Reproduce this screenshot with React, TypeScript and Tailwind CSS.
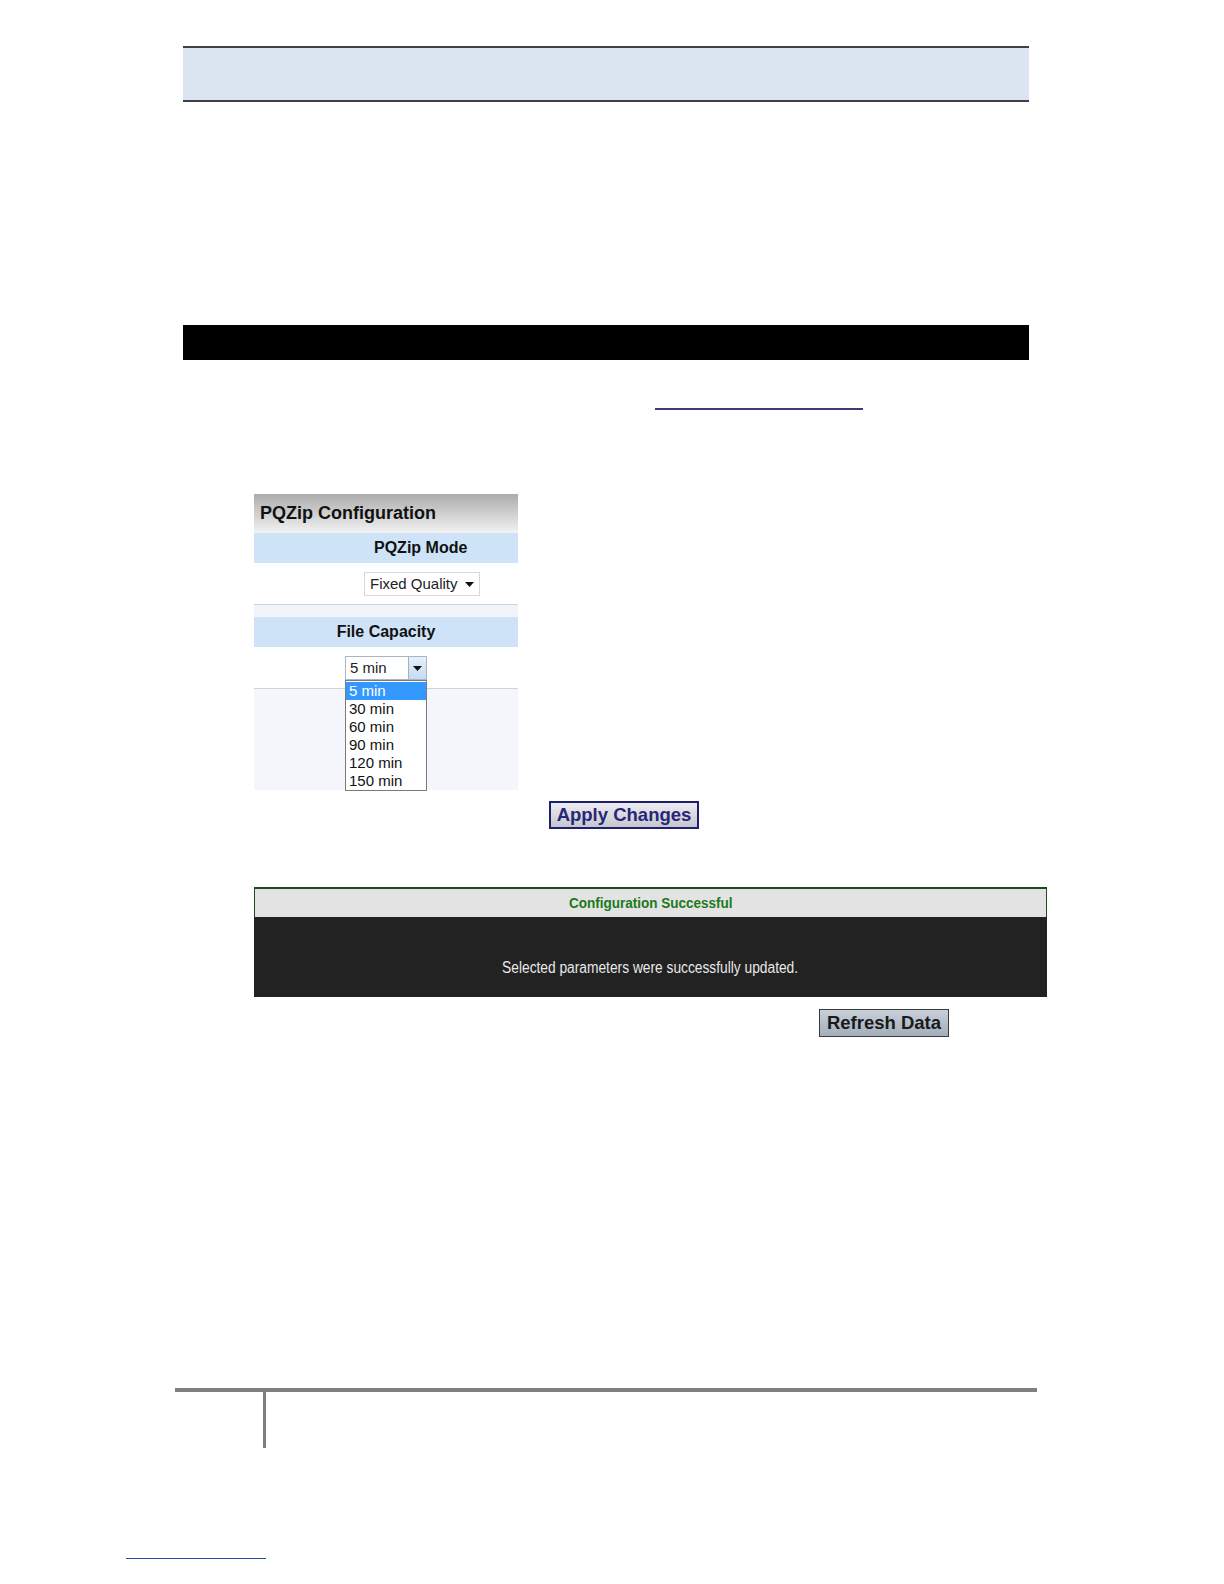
import React from "react";

const Caret = () => (
  <svg width="9" height="5" viewBox="0 0 9 5" aria-hidden="true">
    <path d="M0 0h9L4.5 5z" fill="#111" />
  </svg>
);

const minutes = ["5 min", "30 min", "60 min", "90 min", "120 min", "150 min"];

export default function App() {
  return (
    <div className="relative h-[1584px] w-[1224px] overflow-hidden bg-white font-['Liberation_Sans',Arial,sans-serif]">
      <div className="pt-[46px]">
        {/* page header band */}
        <div className="ml-[183px] h-[56px] w-[846px] border-y-2 border-[#404040] bg-[#dbe5f1]" />
      </div>

      {/* section bar */}
      <div className="ml-[183px] mt-[223px] h-[35px] w-[846px] bg-black" />

      {/* link */}
      <div className="ml-[655px] mt-[48px] h-[2px] w-[208px] bg-[#3f3a78]" />

      {/* PQZip configuration panel */}
      <div className="relative ml-[254px] mt-[84px] w-[264px]">
        <div className="flex h-[39px] items-center bg-gradient-to-b from-[#acacac] to-[#f3f3f3] pl-[6px] text-[18px] font-bold text-[#111]">
          PQZip Configuration
        </div>
        <div className="flex h-[30px] items-center bg-[#cfe3f8] pl-[120px] text-[16px] font-bold text-[#111]">
          PQZip Mode
        </div>
        <div className="h-[41px] bg-white pt-[9px]">
          <div className="ml-[110px] flex h-[24px] w-[116px] items-center justify-between border border-[#d8d8d8] bg-white pl-[5px] pr-[5px] text-[15px] text-[#222]">
            <span>Fixed Quality</span>
            <Caret />
          </div>
        </div>
        <div className="h-[13px] border-t border-[#c9d5e6] bg-[#f3f4fa]" />
        <div className="flex h-[30px] items-center justify-center bg-[#cfe3f8] text-[16px] font-bold text-[#111]">
          File Capacity
        </div>
        <div className="h-[41px] bg-white pt-[9px]">
          <div className="ml-[91px] flex h-[24px] w-[82px] items-stretch border border-[#a9b6c6] bg-white text-[15px] text-[#222]">
            <span className="flex flex-1 items-center pl-[4px]">5 min</span>
            <span className="flex w-[18px] items-center justify-center border-l border-[#9fb3c8] bg-gradient-to-b from-[#e6f0fa] to-[#c4dcf2]">
              <Caret />
            </span>
          </div>
        </div>
        <div className="h-[102px] border-t border-[#c9d5e6] bg-[#f5f5fc]" />

        {/* open dropdown list */}
        <div className="absolute left-[91px] top-[186px] w-[82px] border border-[#7a7a7a] bg-white pt-px text-[15px] leading-[18px] text-[#111]">
          {minutes.map((m, i) => (
            <div
              key={m}
              className={i === 0 ? "bg-[#3399ff] pl-[3px] text-white" : "pl-[3px]"}
            >
              {m}
            </div>
          ))}
        </div>
      </div>

      {/* apply button */}
      <div className="ml-[549px] mt-[11px] flex h-[28px] w-[150px] items-center justify-center border-2 border-[#1f1f6e] bg-gradient-to-b from-[#ececf0] to-[#c6c6ce] text-[18.5px] font-bold text-[#26267a]">
        Apply Changes
      </div>

      {/* status panel */}
      <div className="ml-[254px] mt-[58px] w-[793px]">
        <div className="flex h-[30px] items-center justify-center border-x border-t-2 border-[#1e4a1e] bg-[#e3e3e3] text-[15px] font-bold text-[#1b7a1b]">
          <span className="inline-block scale-x-[0.9]">Configuration Successful</span>
        </div>
        <div className="flex h-[80px] justify-center bg-[#222222] pt-[39px] text-[16px] text-[#e8e8e8]">
          <span className="inline-block scale-x-[0.86]">Selected parameters were successfully updated.</span>
        </div>
      </div>

      {/* refresh button */}
      <div className="ml-[819px] mt-[12px] flex h-[28px] w-[130px] items-center justify-center border border-[#3a3a3a] bg-gradient-to-b from-[#c8d0da] to-[#a2aeba] text-[18.5px] font-bold text-[#1a1a1a]">
        Refresh Data
      </div>

      {/* footer rules */}
      <div className="ml-[175px] mt-[351px] h-[4px] w-[862px] bg-[#808080]" />
      <div className="ml-[263px] h-[56px] w-[3px] bg-[#808080]" />

      {/* bottom link */}
      <div className="ml-[126px] mt-[110px] h-px w-[140px] bg-[#3048a8]" />
    </div>
  );
}
